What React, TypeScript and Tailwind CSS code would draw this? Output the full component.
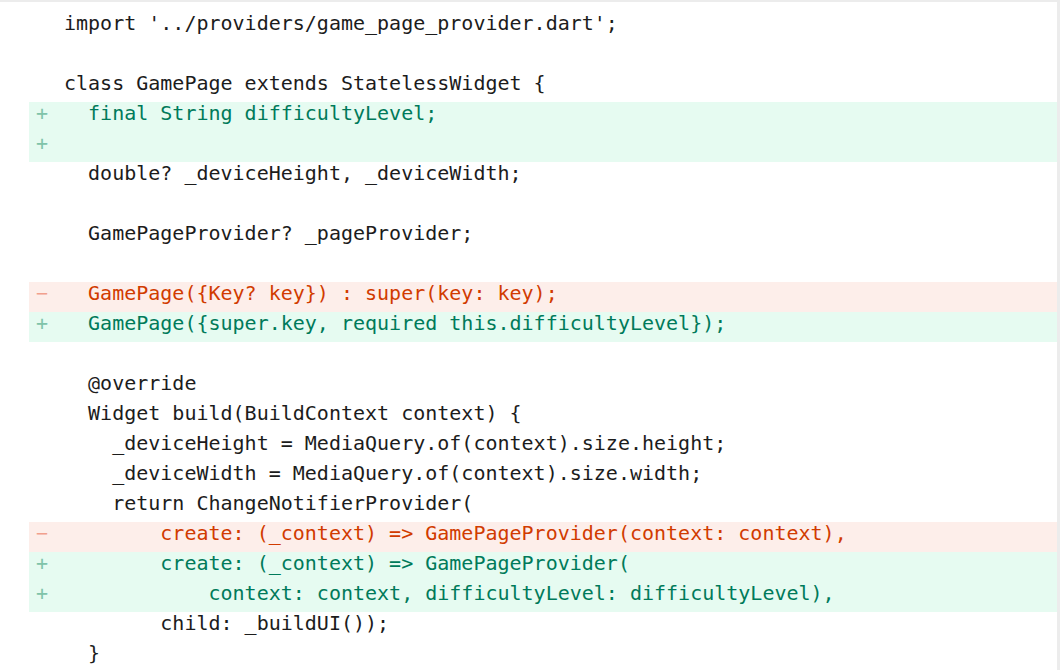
type Kind = "ctx" | "add" | "del";

const lines: [Kind, string][] = [
  ["ctx", "import '../providers/game_page_provider.dart';"],
  ["ctx", ""],
  ["ctx", "class GamePage extends StatelessWidget {"],
  ["add", "  final String difficultyLevel;"],
  ["add", ""],
  ["ctx", "  double? _deviceHeight, _deviceWidth;"],
  ["ctx", ""],
  ["ctx", "  GamePageProvider? _pageProvider;"],
  ["ctx", ""],
  ["del", "  GamePage({Key? key}) : super(key: key);"],
  ["add", "  GamePage({super.key, required this.difficultyLevel});"],
  ["ctx", ""],
  ["ctx", "  @override"],
  ["ctx", "  Widget build(BuildContext context) {"],
  ["ctx", "    _deviceHeight = MediaQuery.of(context).size.height;"],
  ["ctx", "    _deviceWidth = MediaQuery.of(context).size.width;"],
  ["ctx", "    return ChangeNotifierProvider("],
  ["del", "        create: (_context) => GamePageProvider(context: context),"],
  ["add", "        create: (_context) => GamePageProvider("],
  ["add", "            context: context, difficultyLevel: difficultyLevel),"],
  ["ctx", "        child: _buildUI());"],
  ["ctx", "  }"],
];

const DiffLine = ({ kind, code }: { kind: Kind; code: string }) => {
  const row =
    kind === "add"
      ? "bg-[#e6fbf1] text-[#007a5a]"
      : kind === "del"
        ? "bg-[#fdeeea] text-[#d13b00]"
        : "text-[#1c1c1c]";
  const sign = kind === "add" ? "+" : kind === "del" ? "−" : "";
  const signColor = kind === "add" ? "text-[#80c3a9]" : "text-[#f1a08d]";
  return (
    <div className={`flex h-[30px] leading-[23px] ${row}`}>
      <span className={`w-[35px] shrink-0 pl-[7px] ${signColor}`}>{sign}</span>
      <span className="whitespace-pre">{code}</span>
    </div>
  );
};

const App = () => {
  return (
    <div className="h-[670px] w-full overflow-hidden border-t-2 border-r-[3px] border-[#ececec] bg-white pt-[10px] pl-[29px] font-['DejaVu_Sans_Mono',monospace] text-[20px]">
      {lines.map(([kind, code], i) => (
        <DiffLine key={i} kind={kind} code={code} />
      ))}
    </div>
  );
};

export default App;
